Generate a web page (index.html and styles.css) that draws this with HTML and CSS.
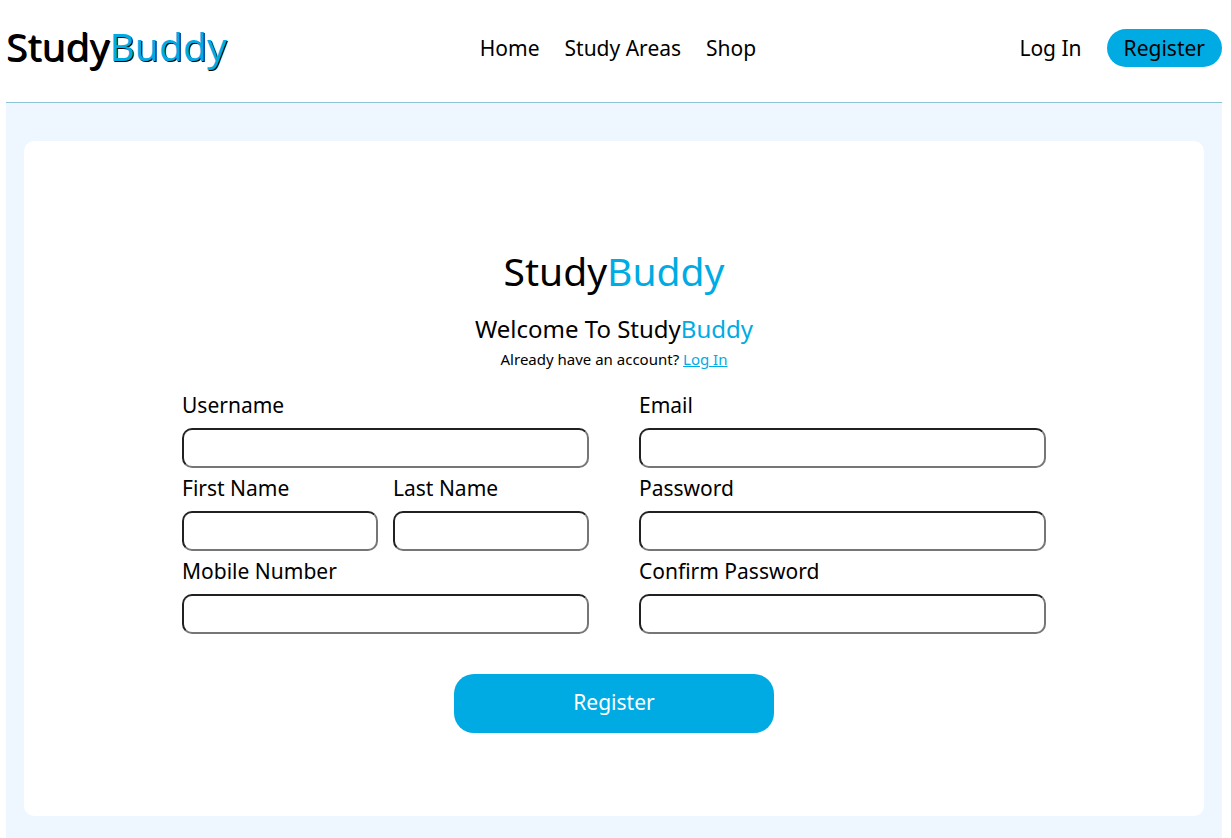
FILE: index.html
```html
<!DOCTYPE html>
<html lang="en">
<head>
<meta charset="utf-8">
<title>StudyBuddy - Register</title>
<meta name="viewport" content="width=device-width, initial-scale=1">
<link rel="stylesheet" href="styles.css">
</head>
<body>
<header class="header">
  <a class="logo" href="#">Study<span class="accent">Buddy</span></a>
  <nav class="nav">
    <a href="#">Home</a>
    <a href="#">Study Areas</a>
    <a href="#">Shop</a>
  </nav>
  <div class="account">
    <a href="#">Log In</a>
    <a class="pill" href="#">Register</a>
  </div>
</header>
<main class="main">
  <section class="card">
    <h1 class="title">Study<span class="accent">Buddy</span></h1>
    <h2 class="welcome">Welcome To Study<span class="accent">Buddy</span></h2>
    <p class="hint">Already have an account? <a class="accent" href="#">Log In</a></p>
    <form class="form">
      <div class="fields">
        <div class="field"><label for="username">Username</label><input id="username" type="text"></div>
        <div class="field"><label for="email">Email</label><input id="email" type="email"></div>
        <div class="names">
          <div class="field"><label for="first">First Name</label><input id="first" type="text"></div>
          <div class="field"><label for="last">Last Name</label><input id="last" type="text"></div>
        </div>
        <div class="field"><label for="password">Password</label><input id="password" type="password"></div>
        <div class="field"><label for="mobile">Mobile Number</label><input id="mobile" type="tel"></div>
        <div class="field"><label for="confirm">Confirm Password</label><input id="confirm" type="password"></div>
      </div>
      <button class="submit" type="submit">Register</button>
    </form>
  </section>
</main>
</body>
</html>
```
FILE: styles.css
```css
* {
  box-sizing: border-box;
}

body {
  margin: 0 9px 0 6px;
  background: #fff;
  color: #000;
  font-family: "Noto Sans", "Open Sans", sans-serif;
  font-size: 21px;
}

.accent {
  color: #00abe4;
}

.header {
  display: grid;
  grid-template-columns: 1fr auto 1fr;
  align-items: center;
  padding: 18px 0 24px;
  border-bottom: 1px solid #8cc4d6;
}

.header a {
  color: inherit;
  text-decoration: none;
}

.header .logo {
  padding-bottom: 4px;
  font-size: 39px;
  line-height: 56px;
  text-shadow: 1px 1px #000;
}

.nav {
  display: flex;
  gap: 25px;
  padding-left: 8px;
}

.account {
  display: flex;
  align-items: center;
  justify-content: flex-end;
  gap: 25px;
}

.pill {
  padding: 0 17px;
  border-radius: 19px;
  background: #00abe4;
  line-height: 38px;
}

.main {
  padding: 38px 18px 22px;
  background: #eef7ff;
}

.card {
  padding: 101px 24px 83px;
  border-radius: 10px;
  background: #fff;
  text-align: center;
}

.title {
  margin: 0 0 15px;
  font-size: 39px;
  font-weight: 400;
  line-height: 58px;
}

.welcome {
  margin: 0;
  font-size: 24px;
  font-weight: 400;
  line-height: 28px;
}

.hint {
  margin: 0 0 13px;
  font-size: 15px;
  line-height: 32px;
}

.form {
  max-width: 864px;
  margin: 0 auto;
}

.fields {
  display: grid;
  grid-template-columns: 1fr 1fr;
  gap: 3px 50px;
  margin-bottom: 40px;
  text-align: left;
}

.names {
  display: grid;
  grid-template-columns: 1fr 1fr;
  gap: 15px;
}

.field {
  display: flex;
  flex-direction: column;
  gap: 5px;
  min-width: 0;
}

.field label {
  line-height: 35px;
}

.field input {
  width: 100%;
  height: 40px;
  padding: 0 10px;
  border: 2px solid;
  border-color: #212121 #767676 #767676 #212121;
  border-radius: 10px;
  background: #fff;
  font: inherit;
}

.submit {
  width: 320px;
  max-width: 100%;
  height: 59px;
  padding: 0 16px 3px;
  border: 0;
  border-radius: 20px;
  background: #00abe4;
  color: #fff;
  font: inherit;
}
```
